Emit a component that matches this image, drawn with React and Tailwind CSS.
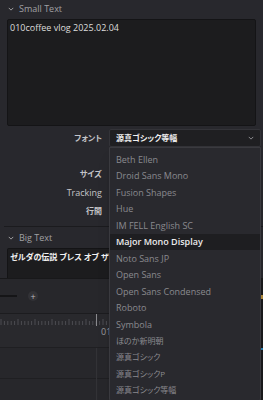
import React from "react";

const fonts = [
  "Beth Ellen",
  "Droid Sans Mono",
  "Fusion Shapes",
  "Hue",
  "IM FELL English SC",
  "Major Mono Display",
  "Noto Sans JP",
  "Open Sans",
  "Open Sans Condensed",
  "Roboto",
  "Symbola",
  "ほのか新明朝",
  "源真ゴシック",
  "源真ゴシックP",
  "源真ゴシック等幅",
];

const isJa = (s) => /[^\x00-\x7f]/.test(s);

const Chevron = ({ className }) => (
  <svg viewBox="0 0 8 5" className={className} fill="none" stroke="currentColor" strokeWidth="1.3">
    <path d="M1 1l3 3 3-3" />
  </svg>
);

const SectionHeader = ({ title }) => (
  <div className="flex items-center h-[16px] pl-[8px] gap-[5px] text-[#a0a0a4]">
    <Chevron className="w-[6px] h-[4px]" />
    <span className="text-[9px]">{title}</span>
  </div>
);

const Label = ({ children, ja }) => (
  <div
    className={
      "w-[102px] text-right text-[#c4c4c8] " +
      (ja ? "text-[8px] font-bold [font-feature-settings:'palt']" : "text-[9px] font-medium")
    }
  >
    {children}
  </div>
);

const FontDropdown = () => (
  <div className="relative ml-[7px] w-[152px]">
    <div className="h-[18px] flex items-center justify-between pl-[6px] pr-[6px] bg-[#1f1f22] border border-[#333338] rounded-[2px]">
      <span className="text-[8px] font-bold text-[#f0f0f0] [font-feature-settings:'palt']">源真ゴシック等幅</span>
      <Chevron className="w-[6px] h-[4px] text-[#8c8c90]" />
    </div>
    <div className="absolute left-0 top-[18px] w-[152px] pt-[3px] pb-[1px] bg-[#29292e] border border-[#3a3a3f] rounded-b-[2px] z-20 shadow-lg">
      {fonts.map((f) => {
        const active = f === "Major Mono Display";
        return (
          <div
            key={f}
            className={
              "h-[16.5px] flex items-center pl-[6px] " +
              (active ? "bg-[#1e1e21] text-[#ececec] font-semibold " : "text-[#8a8a8e] ") +
              (isJa(f) ? "text-[8px] [font-feature-settings:'palt']" : "text-[9px]")
            }
          >
            {f}
          </div>
        );
      })}
    </div>
  </div>
);

const Ruler = () => {
  const ticks = [];
  for (let x = 1; x < 263; x += 3.4) ticks.push(x);
  return (
    <svg className="absolute left-0 top-[4px] w-[263px] h-[10px]" viewBox="0 0 263 10">
      {ticks.map((x, i) => (
        <line key={i} x1={x} x2={x} y1={i % 5 === 0 ? 1 : 3} y2="7" stroke="#55555a" strokeWidth="0.8" />
      ))}
    </svg>
  );
};

export default function App() {
  return (
    <div
      className="w-[263px] h-[400px] overflow-hidden relative bg-[#28282d] select-none"
      style={{ fontFamily: "'Open Sans', 'Noto Sans CJK JP', sans-serif" }}
    >
      {/* inspector */}
      <div className="h-[278px] pt-[1px] relative z-20">
        <SectionHeader title="Small Text" />
        <div className="mx-[7px] mt-[2px] h-[107px] bg-[#1c1c1e] border border-[#141416] rounded-[2px] px-[2px] pt-[2px] text-[9px] leading-[12px] text-[#dcdcdc]">
          010coffee vlog 2025.02.04
        </div>
        <div className="flex items-center h-[18px] mt-[3px]">
          <Label ja>フォント</Label>
          <FontDropdown />
        </div>
        <div className="h-[18px]" />
        <div className="flex items-center h-[18px]">
          <Label ja>サイズ</Label>
        </div>
        <div className="flex items-center h-[19px]">
          <Label>Tracking</Label>
        </div>
        <div className="flex items-center h-[18px]">
          <Label ja>行間</Label>
        </div>
        <div className="ml-[4px] mt-[6px] h-px bg-[#1b1b1e]" />
        <div className="mt-[3px]">
          <SectionHeader title="Big Text" />
        </div>
        <div className="mx-[7px] mt-[2px] h-[30px] bg-[#1c1c1e] border border-[#141416] border-b-0 rounded-t-[2px] px-[2px] pt-[2px] overflow-hidden text-[8px] leading-[11px] font-bold text-[#f2f2f2] [font-feature-settings:'palt'] whitespace-nowrap">
          ゼルダの伝説 ブレス オブ ザ ワイルド
        </div>
      </div>

      {/* timeline */}
      <div className="h-[122px] border-t border-[#18181a] bg-[#27272b] flex flex-col relative z-10">
        <div className="h-[34px] flex items-center shrink-0">
          <div className="w-[17px] h-[1.5px] bg-[#151517]" />
          <div className="ml-[11px] w-[10px] h-[10px] rounded-full bg-[#323236] flex items-center justify-center text-[#b8b8bc] text-[9px] leading-none">
            +
          </div>
        </div>
        <div className="relative h-[34px] shrink-0 border-t border-[#1c1c1f] bg-[#29292d]">
          <Ruler />
          <div className="absolute left-[96px] top-0 w-px h-[12px] bg-[#8a8a8e]" />
          <span className="absolute left-[101px] top-[11px] text-[9px] text-[#9a9a9e]">01</span>
        </div>
        <div className="relative flex-1 border-t border-[#1f1f22]">
          <div className="mt-[30px] h-px bg-[#1f1f22]" />
          <div className="absolute left-[96px] top-0 bottom-0 w-px bg-[#323236]" />
        </div>
      </div>

      {/* right edge */}
      <div className="absolute right-0 top-[278px] w-[2px] h-[122px] bg-[#1a1a1c] z-10" />
      <div className="absolute right-0 top-[295px] w-[2px] h-[4px] bg-[#b08a3a] z-10" />
      <div className="absolute right-0 top-[348px] w-[2px] h-[2px] bg-[#2a7fb0] z-10" />
    </div>
  );
}
